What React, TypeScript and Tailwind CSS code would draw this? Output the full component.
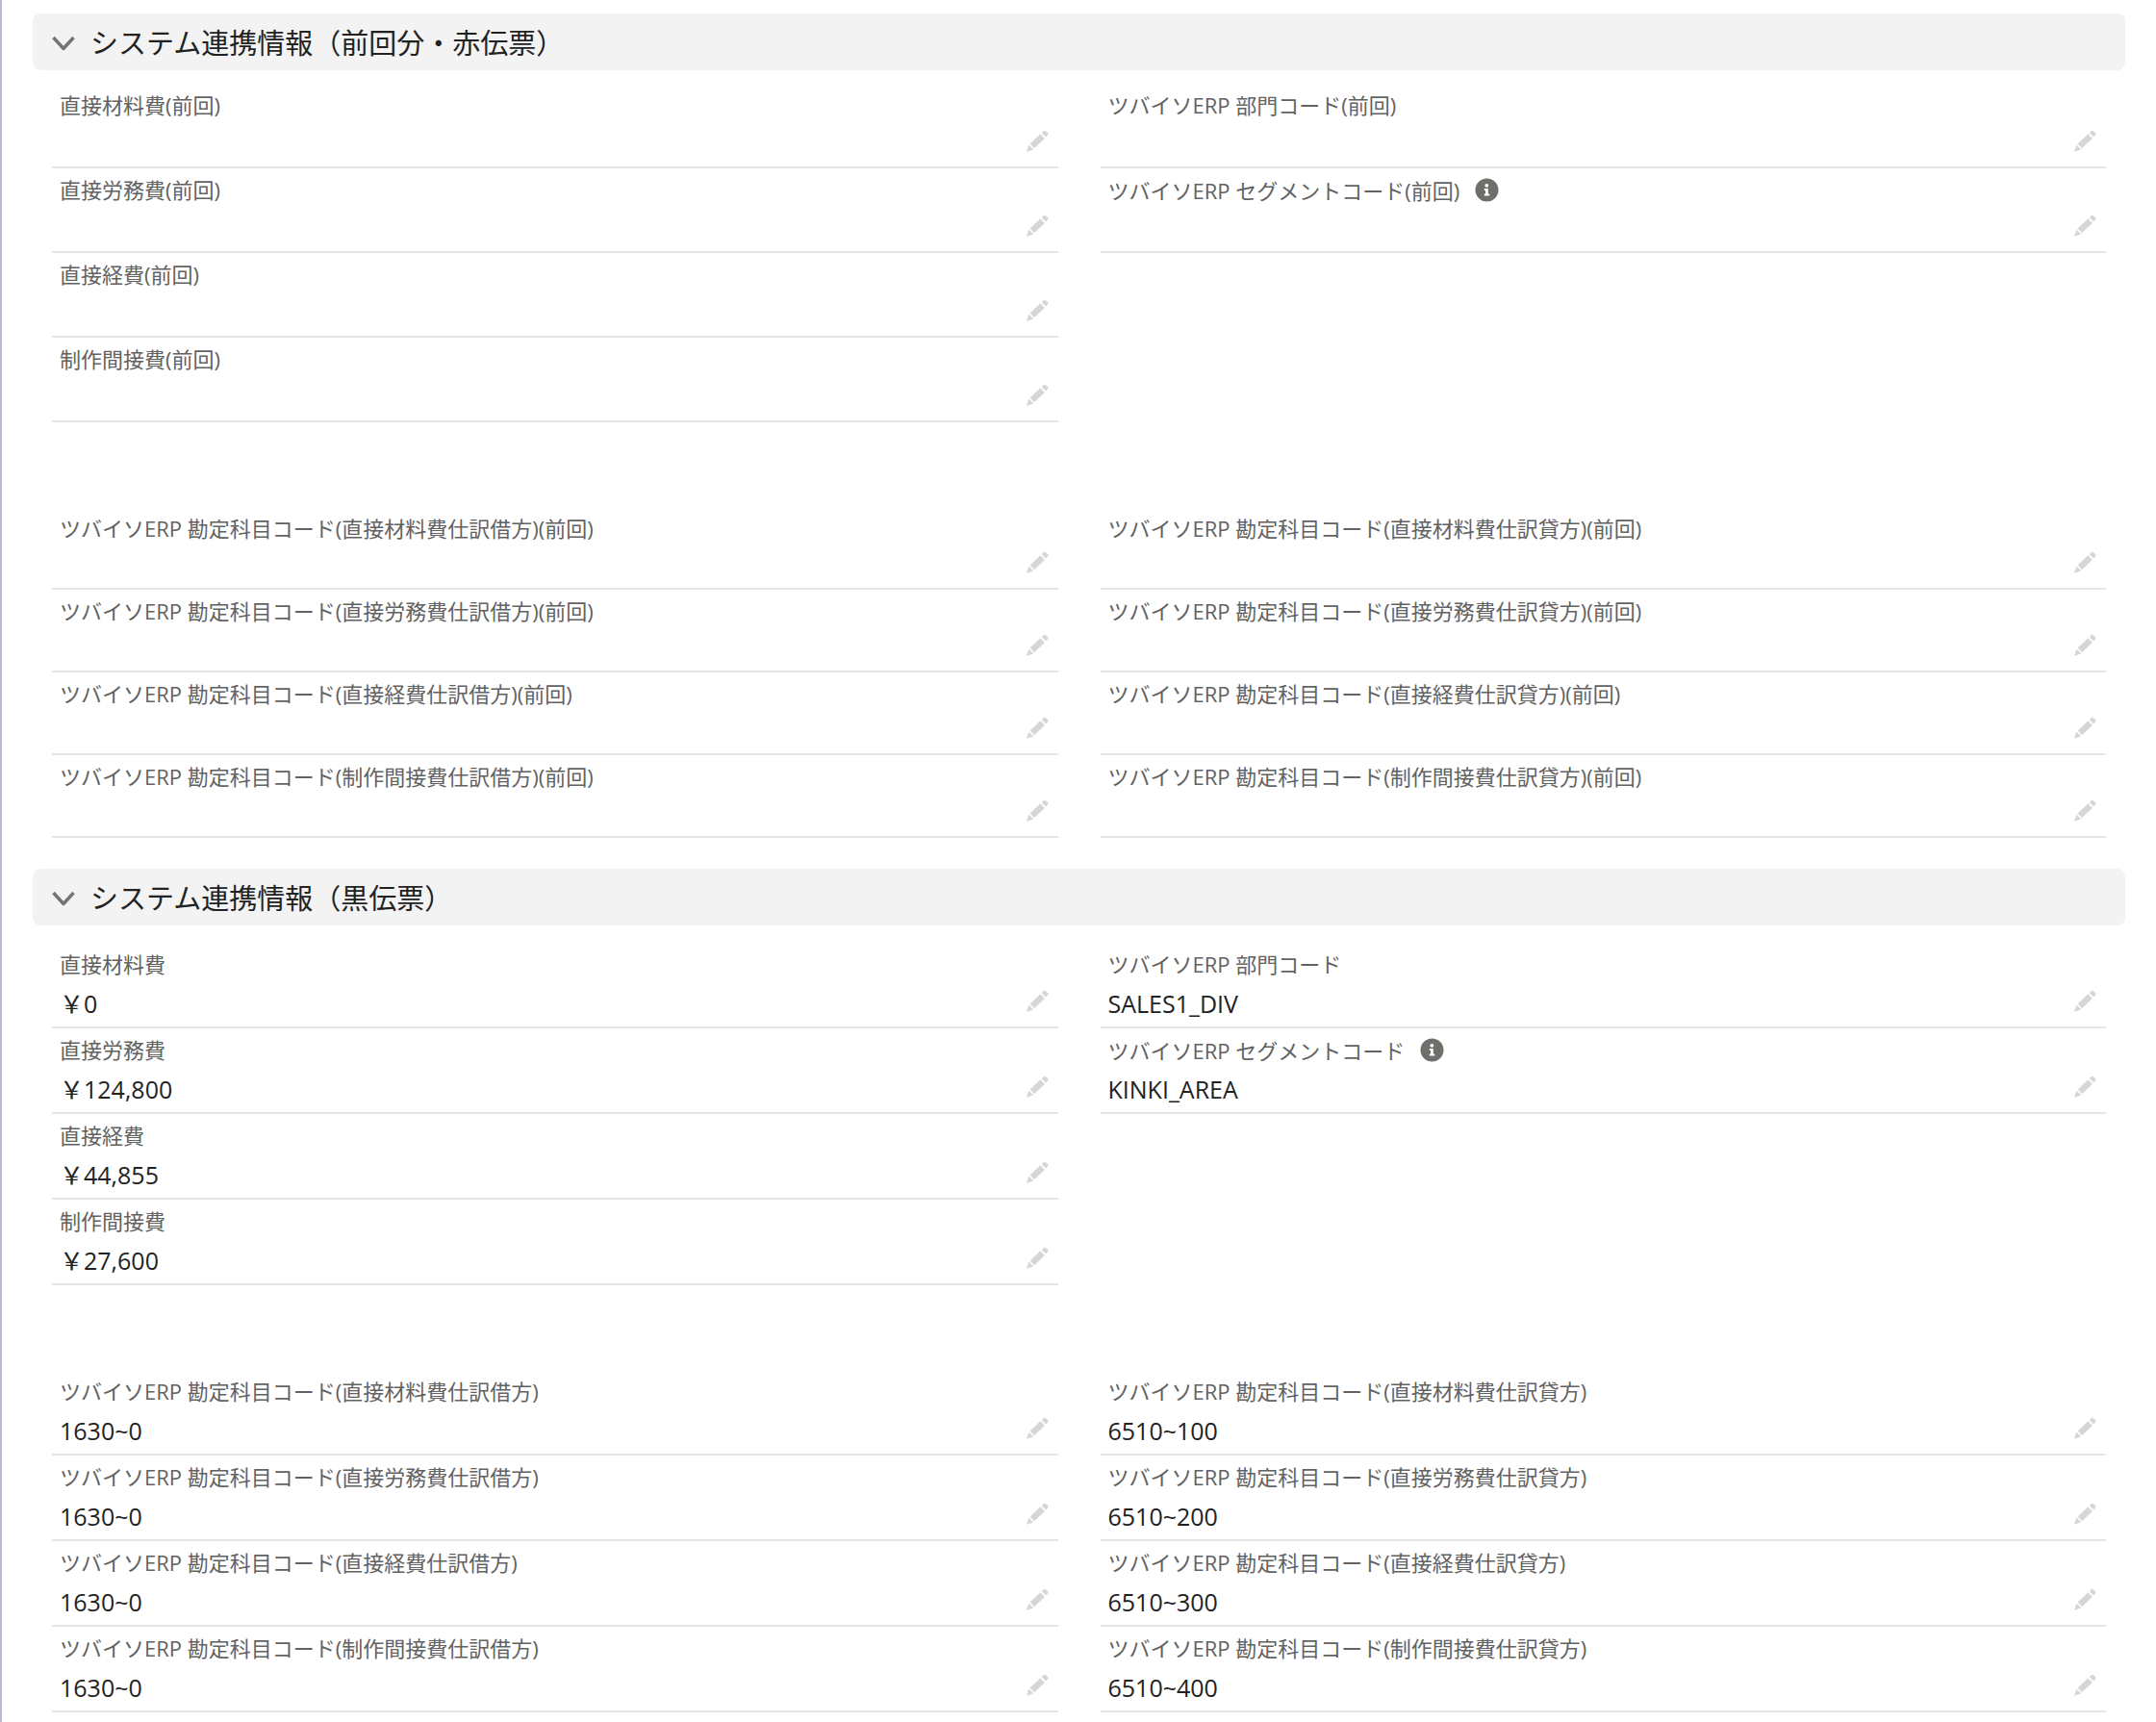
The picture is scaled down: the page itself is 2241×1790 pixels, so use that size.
import { useState, type ReactNode } from 'react';

type Field = {
  label: string;
  value?: string;
  hint?: string;
};

type Row = [Field, Field | null];

const PREVIOUS_COSTS: Row[] = [
  [{ label: '直接材料費(前回)' }, { label: 'ツバイソERP 部門コード(前回)' }],
  [
    { label: '直接労務費(前回)' },
    { label: 'ツバイソERP セグメントコード(前回)', hint: 'セグメントコード(前回)のヘルプ' },
  ],
  [{ label: '直接経費(前回)' }, null],
  [{ label: '制作間接費(前回)' }, null],
];

const PREVIOUS_ACCOUNTS: Row[] = [
  [
    { label: 'ツバイソERP 勘定科目コード(直接材料費仕訳借方)(前回)' },
    { label: 'ツバイソERP 勘定科目コード(直接材料費仕訳貸方)(前回)' },
  ],
  [
    { label: 'ツバイソERP 勘定科目コード(直接労務費仕訳借方)(前回)' },
    { label: 'ツバイソERP 勘定科目コード(直接労務費仕訳貸方)(前回)' },
  ],
  [
    { label: 'ツバイソERP 勘定科目コード(直接経費仕訳借方)(前回)' },
    { label: 'ツバイソERP 勘定科目コード(直接経費仕訳貸方)(前回)' },
  ],
  [
    { label: 'ツバイソERP 勘定科目コード(制作間接費仕訳借方)(前回)' },
    { label: 'ツバイソERP 勘定科目コード(制作間接費仕訳貸方)(前回)' },
  ],
];

const CURRENT_COSTS: Row[] = [
  [
    { label: '直接材料費', value: '￥0' },
    { label: 'ツバイソERP 部門コード', value: 'SALES1_DIV' },
  ],
  [
    { label: '直接労務費', value: '￥124,800' },
    { label: 'ツバイソERP セグメントコード', value: 'KINKI_AREA', hint: 'セグメントコードのヘルプ' },
  ],
  [{ label: '直接経費', value: '￥44,855' }, null],
  [{ label: '制作間接費', value: '￥27,600' }, null],
];

const CURRENT_ACCOUNTS: Row[] = [
  [
    { label: 'ツバイソERP 勘定科目コード(直接材料費仕訳借方)', value: '1630~0' },
    { label: 'ツバイソERP 勘定科目コード(直接材料費仕訳貸方)', value: '6510~100' },
  ],
  [
    { label: 'ツバイソERP 勘定科目コード(直接労務費仕訳借方)', value: '1630~0' },
    { label: 'ツバイソERP 勘定科目コード(直接労務費仕訳貸方)', value: '6510~200' },
  ],
  [
    { label: 'ツバイソERP 勘定科目コード(直接経費仕訳借方)', value: '1630~0' },
    { label: 'ツバイソERP 勘定科目コード(直接経費仕訳貸方)', value: '6510~300' },
  ],
  [
    { label: 'ツバイソERP 勘定科目コード(制作間接費仕訳借方)', value: '1630~0' },
    { label: 'ツバイソERP 勘定科目コード(制作間接費仕訳貸方)', value: '6510~400' },
  ],
];

function PencilIcon() {
  return (
    <svg
      width="24"
      height="24"
      viewBox="0 0 24 24"
      fill="currentColor"
      stroke="currentColor"
      strokeWidth="0.8"
      strokeLinejoin="round"
      aria-hidden="true"
    >
      <path d="M5 14.500 15.300 4.700l4.200 4.200L9.200 18.700z" />
      <path d="M17.200 3 19 1.400q1-.8 2 .1l1.700 1.700q.9 1 .1 2L21.200 7z" />
      <path d="M3.600 16.200 7.600 20.200 1.500 22.200z" />
    </svg>
  );
}

function InfoIcon() {
  return (
    <svg width="25" height="25" viewBox="0 0 25 25" aria-hidden="true">
      <circle cx="12.500" cy="12.500" r="12" fill="#706e6b" />
      <circle cx="12.300" cy="7.800" r="1.900" fill="#fff" />
      <path d="M9.800 11h4v5.600h1.400v1.900H9.800v-1.900h1.200v-3.700H9.800z" fill="#fff" />
    </svg>
  );
}

function FieldCell({ field }: { field: Field | null }) {
  if (!field) return <div />;

  return (
    <div className="flex flex-col justify-between border-b-2 border-[#e5e5e5] pt-2.5 pr-2.5 pb-1.5 pl-2">
      <dt className="flex items-center gap-4 text-[22px] leading-6 text-[#626262]">
        {field.label}
        {field.hint && (
          <button type="button" aria-label={field.hint} className="shrink-0">
            <InfoIcon />
          </button>
        )}
      </dt>
      <dd className="flex min-h-9 items-center justify-between text-[25px] leading-9 text-[#222]">
        <span>{field.value}</span>
        <button type="button" aria-label={`${field.label} を編集`} className="pb-1 text-[#d8d6d4]">
          <PencilIcon />
        </button>
      </dd>
    </div>
  );
}

function FieldGrid({ rows, className }: { rows: Row[]; className: string }) {
  return (
    <dl className={`grid grid-cols-2 gap-x-11 px-5 ${className}`}>
      {rows.flatMap(([left, right], index) => [
        <FieldCell key={`${index}-left`} field={left} />,
        <FieldCell key={`${index}-right`} field={right} />,
      ])}
    </dl>
  );
}

function Section({ title, children }: { title: string; children: ReactNode }) {
  const [open, setOpen] = useState(true);

  return (
    <section>
      <h3>
        <button
          type="button"
          aria-expanded={open}
          onClick={() => setOpen((prev) => !prev)}
          className="flex w-full items-center gap-4 rounded-lg bg-[#f3f3f3] px-5 pt-[13px] pb-[11px] text-left text-[29px] leading-[35px] text-[#222]"
        >
          <svg
            width="24"
            height="18"
            viewBox="0 0 24 18"
            fill="none"
            className={open ? '' : '-rotate-90'}
            aria-hidden="true"
          >
            <path
              d="M1.500 3 12 14.500 22.500 3"
              stroke="#747474"
              strokeWidth="3.400"
              strokeLinejoin="round"
            />
          </svg>
          {title}
        </button>
      </h3>
      {open && children}
    </section>
  );
}

export default function App() {
  return (
    <main
      lang="ja"
      className="flex min-h-screen flex-col gap-8 border-l-2 border-[#b4bccb] bg-white pt-3.5 pr-8 pb-2 pl-8 font-['Open_Sans','Noto_Sans_CJK_JP',sans-serif]"
    >
      <Section title="システム連携情報（前回分・赤伝票）">
        <FieldGrid rows={PREVIOUS_COSTS} className="mt-3.5 auto-rows-[88px]" />
        <FieldGrid rows={PREVIOUS_ACCOUNTS} className="mt-22 auto-rows-[86px]" />
      </Section>

      <Section title="システム連携情報（黒伝票）">
        <FieldGrid rows={CURRENT_COSTS} className="mt-4.5 auto-rows-[89px]" />
        <FieldGrid rows={CURRENT_ACCOUNTS} className="mt-22 auto-rows-[89px]" />
      </Section>
    </main>
  );
}
